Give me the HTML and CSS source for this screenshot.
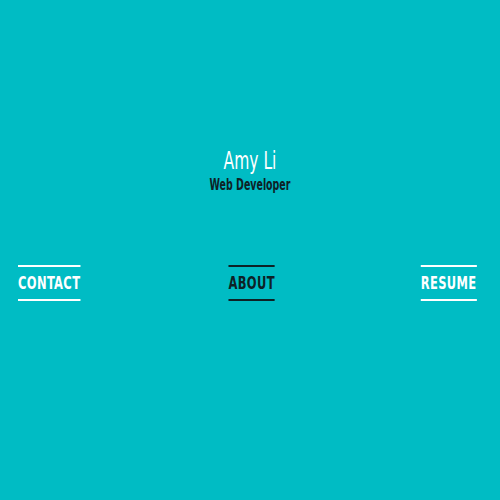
FILE: index.html
```html
<!DOCTYPE html>
<html>
<head>
<meta charset="utf-8">
<link rel="stylesheet" href="styles.css">
</head>
<body>
<div class="page">
  <header class="intro">
    <h1 class="name">Amy Li</h1>
    <p class="role">Web Developer</p>
  </header>
  <nav class="nav">
    <a class="nav-link left" href="#">CONTACT</a>
    <a class="nav-link active" href="#">ABOUT</a>
    <a class="nav-link right" href="#">RESUME</a>
  </nav>
</div>
</body>
</html>
```
FILE: styles.css
```css
html, body {
  margin: 0;
  padding: 0;
}
body {
  background: #00bcc4;
  font-family: "DejaVu Sans Condensed", "DejaVu Sans", sans-serif;
  font-stretch: condensed;
}
.page {
  height: 500px;
  display: flex;
  flex-direction: column;
}
.intro {
  margin-top: 146px;
  text-align: center;
}
.name {
  margin: 0;
  font-size: 24px;
  font-weight: normal;
  color: #ffffff;
  line-height: 30px;
  transform: scaleX(0.72);
}
.role {
  margin: 0;
  font-size: 15px;
  font-weight: bold;
  color: #0e2226;
  line-height: 18px;
  transform: scaleX(0.7);
}
.nav {
  margin-top: 71px;
  display: flex;
  justify-content: space-between;
  padding: 0 23px 0 18px;
}
.nav-link {
  display: block;
  color: #ffffff;
  text-decoration: none;
  font-weight: bold;
  font-size: 18px;
  letter-spacing: 0.5px;
  line-height: 32px;
  border-top: 2px solid #ffffff;
  border-bottom: 2px solid #ffffff;
  transform: scaleX(0.71);
}
.nav-link.left {
  transform-origin: left center;
}
.nav-link.right {
  transform-origin: right center;
}
.nav-link.active {
  color: #0e2226;
  border-color: #0e2226;
}
```
